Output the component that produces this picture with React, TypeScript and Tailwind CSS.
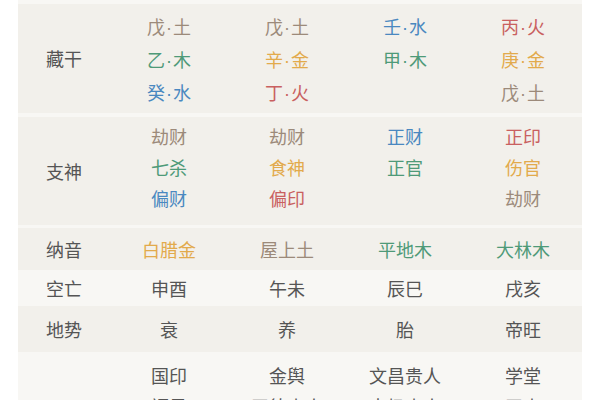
import React from "react";

const C = {
  earth: "text-[#9c8a7a]",
  wood: "text-[#4e9a78]",
  water: "text-[#4a88c0]",
  fire: "text-[#c96060]",
  metal: "text-[#e2aa4c]",
  plain: "text-[#555555]",
};

type Item = { t: React.ReactNode; c: string };

const dot = (a: string, b: string) => (
  <>
    {a}
    <span className="mx-[1px]" style={{ fontFamily: '"Liberation Sans", sans-serif' }}>
      ·
    </span>
    {b}
  </>
);

const row1: Item[][] = [
  [
    { t: dot("戊", "土"), c: C.earth },
    { t: dot("乙", "木"), c: C.wood },
    { t: dot("癸", "水"), c: C.water },
  ],
  [
    { t: dot("戊", "土"), c: C.earth },
    { t: dot("辛", "金"), c: C.metal },
    { t: dot("丁", "火"), c: C.fire },
  ],
  [
    { t: dot("壬", "水"), c: C.water },
    { t: dot("甲", "木"), c: C.wood },
  ],
  [
    { t: dot("丙", "火"), c: C.fire },
    { t: dot("庚", "金"), c: C.metal },
    { t: dot("戊", "土"), c: C.earth },
  ],
];

const row2: Item[][] = [
  [
    { t: "劫财", c: C.earth },
    { t: "七杀", c: C.wood },
    { t: "偏财", c: C.water },
  ],
  [
    { t: "劫财", c: C.earth },
    { t: "食神", c: C.metal },
    { t: "偏印", c: C.fire },
  ],
  [
    { t: "正财", c: C.water },
    { t: "正官", c: C.wood },
  ],
  [
    { t: "正印", c: C.fire },
    { t: "伤官", c: C.metal },
    { t: "劫财", c: C.earth },
  ],
];

function Cell({ items, top = false }: { items: Item[]; top?: boolean }) {
  return (
    <div className={`w-[118px] flex flex-col items-center ${top ? "justify-start" : "justify-center"}`}>
      {items.map((it, i) => (
        <div key={i} className={`leading-[31px] ${it.c}`}>
          {it.t}
        </div>
      ))}
    </div>
  );
}

function Row({
  label,
  cols,
  h,
  bg,
  top = false,
  pt = "",
}: {
  label: string;
  cols: Item[][];
  h: string;
  bg: string;
  top?: boolean;
  pt?: string;
}) {
  return (
    <div className={`flex ${h} ${bg}`}>
      <div className="w-[94px] flex items-center justify-center text-[#555555]">
        <span className="leading-[31px]">{label}</span>
      </div>
      <div className={`flex ${pt}`}>
        {cols.map((c, i) => (
          <Cell key={i} items={c} top={top} />
        ))}
      </div>
    </div>
  );
}

export default function App() {
  const dark = "bg-[#f2f0eb]";
  const light = "bg-[#f8f7f4]";
  return (
    <div
      className="w-[600px] h-[400px] overflow-hidden bg-white"
      style={{ fontFamily: '"Noto Sans CJK SC", "Noto Sans", sans-serif' }}
    >
      <div className="ml-[18px] w-[564px] text-[18px] flex flex-col">
        <div className={`h-[4px] ${light}`} />
        <Row label="藏干" cols={row1} h="h-[109px]" bg={dark} top pt="pt-[7px]" />
        <div className={`h-[4px] ${light}`} />
        <Row label="支神" cols={row2} h="h-[108px]" bg={dark} top pt="pt-[4px]" />
        <div className={`h-[3px] ${light}`} />
        <Row
          label="纳音"
          cols={[
            [{ t: "白腊金", c: C.metal }],
            [{ t: "屋上土", c: C.earth }],
            [{ t: "平地木", c: C.wood }],
            [{ t: "大林木", c: C.wood }],
          ]}
          h="h-[42px]"
          bg={dark}
        />
        <Row
          label="空亡"
          cols={[
            [{ t: "申酉", c: C.plain }],
            [{ t: "午未", c: C.plain }],
            [{ t: "辰巳", c: C.plain }],
            [{ t: "戌亥", c: C.plain }],
          ]}
          h="h-[36px]"
          bg={light}
        />
        <Row
          label="地势"
          cols={[
            [{ t: "衰", c: C.plain }],
            [{ t: "养", c: C.plain }],
            [{ t: "胎", c: C.plain }],
            [{ t: "帝旺", c: C.plain }],
          ]}
          h="h-[46px]"
          bg={dark}
        />
        <Row
          label=""
          cols={[
            [
              { t: "国印", c: C.plain },
              { t: "福星", c: C.plain },
            ],
            [
              { t: "金舆", c: C.plain },
              { t: "天德贵人", c: C.plain },
            ],
            [
              { t: "文昌贵人", c: C.plain },
              { t: "太极贵人", c: C.plain },
            ],
            [
              { t: "学堂", c: C.plain },
              { t: "天喜", c: C.plain },
            ],
          ]}
          h="h-[80px]"
          bg={light}
          top
          pt="pt-[8px]"
        />
      </div>
    </div>
  );
}
